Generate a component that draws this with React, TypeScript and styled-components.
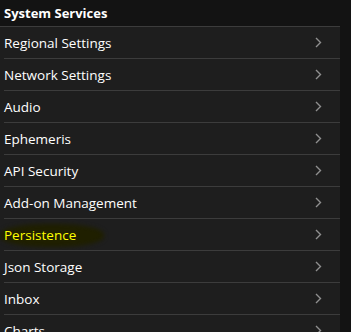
import styled, { createGlobalStyle } from "styled-components"

const GlobalStyle = createGlobalStyle`
    html, body {
        margin: 0;
        padding: 0;
        background: #131313;
        overflow: hidden;
    }
    body {
        font-family: "Open Sans", "Noto Sans", sans-serif;
        -webkit-font-smoothing: antialiased;
    }
`

const Screen = styled.div`
    display: flex;
    width: 351px;
    height: 332px;
    overflow: hidden;
`

const Panel = styled.div`
    width: 340px;
    display: flex;
    flex-direction: column;
`

const Scrollbar = styled.div`
    flex: 1;
    background: #131313;
`

const Header = styled.div`
    height: 26px;
    flex-shrink: 0;
    background: #131313;
    border-bottom: 1px solid #3c3c3c;
    color: #ffffff;
    font-weight: 700;
    font-size: 13px;
    display: flex;
    align-items: center;
    padding-left: 4px;
`

const Row = styled.div`
    height: 32px;
    flex-shrink: 0;
    box-sizing: border-box;
    padding: 0 18px 1px 4px;
    background: #1e1e1e;
    display: flex;
    align-items: center;
    justify-content: space-between;
    position: relative;

    &::after {
        content: "";
        position: absolute;
        left: 4px;
        right: 0;
        bottom: 0;
        height: 1px;
        background: #3c3c3c;
    }
`

const Label = styled.span<{ $active?: boolean }>`
    font-size: 13.5px;
    color: ${(p) => (p.$active ? "#ffff00" : "#ffffff")};
    position: relative;
    ${(p) =>
        p.$active &&
        `
        &::before {
            content: "";
            position: absolute;
            left: -4px;
            right: -28px;
            top: -2px;
            bottom: -3px;
            border-radius: 45%;
            background: #1f1f00;
            filter: blur(2px);
            z-index: 0;
        }
    `}
`

const LabelText = styled.span`
    position: relative;
    z-index: 1;
`

const Chevron = () => (
    <svg width="7" height="11" viewBox="0 0 7 11">
        <path d="M1 1 L5.5 5.5 L1 10" fill="none" stroke="#8f8f8f" strokeWidth="1.4" />
    </svg>
)

const items = [
    "Regional Settings",
    "Network Settings",
    "Audio",
    "Ephemeris",
    "API Security",
    "Add-on Management",
    "Persistence",
    "Json Storage",
    "Inbox",
    "Charts",
]

function App(): JSX.Element {
    return (
        <>
            <GlobalStyle />
            <Screen>
                <Panel>
                    <Header>System Services</Header>
                    {items.map((item) => (
                        <Row key={item}>
                            <Label $active={item === "Persistence"}>
                                <LabelText>{item}</LabelText>
                            </Label>
                            <Chevron />
                        </Row>
                    ))}
                </Panel>
                <Scrollbar />
            </Screen>
        </>
    )
}

export default App
